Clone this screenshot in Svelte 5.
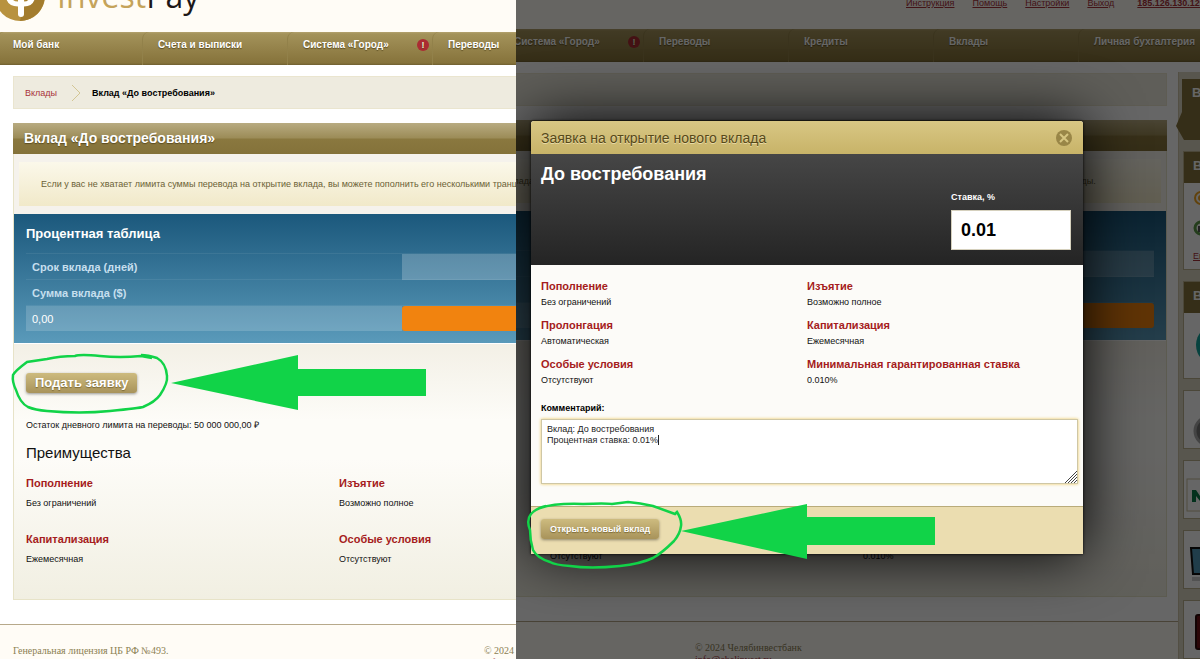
<script lang="ts">
	const tabs = [
		{ name: 'Мой банк', alert: false },
		{ name: 'Счета и выписки', alert: false },
		{ name: 'Система «Город»', alert: true },
		{ name: 'Переводы', alert: false },
		{ name: 'Кредиты', alert: false },
		{ name: 'Вклады', alert: false },
		{ name: 'Личная бухгалтерия', alert: false }
	];

	const links = ['Инструкция', 'Помощь', 'Настройки', 'Выход'];

	const benefits = [
		{ title: 'Пополнение', text: 'Без ограничений' },
		{ title: 'Изъятие', text: 'Возможно полное' },
		{ title: 'Пролонгация', text: 'Автоматическая' },
		{ title: 'Капитализация', text: 'Ежемесячная' },
		{ title: 'Особые условия', text: 'Отсутствуют' },
		{ title: 'Минимальная ставка', text: '0.010%' }
	];

	const terms = [
		{ title: 'Пополнение', text: 'Без ограничений' },
		{ title: 'Изъятие', text: 'Возможно полное' },
		{ title: 'Пролонгация', text: 'Автоматическая' },
		{ title: 'Капитализация', text: 'Ежемесячная' },
		{ title: 'Особые условия', text: 'Отсутствуют' },
		{ title: 'Минимальная гарантированная ставка', text: '0.010%' }
	];

	let rate = $state('0.01');
	let comment = $state('Вклад: До востребования\nПроцентная ставка: 0.01%');
	let opened = $state(true);
</script>

{#snippet page()}
	<header class="top">
		<div class="logo">
			<svg width="50" height="50" viewBox="0 0 50 50">
				<circle cx="25" cy="25" r="25" fill="#b8923f" />
				<path d="M42 7A25 25 0 0 1 25 50L30 30Z" fill="#a37c2e" />
				<path d="M13 16v6q0 11 10 11h6q9 0 9-11v-6" fill="none" stroke="#fff" stroke-width="5" />
				<path d="M26 8v35" stroke="#fff" stroke-width="6" stroke-linecap="round" />
			</svg>
			<span class="brand"><span class="gold">Invest</span>Pay</span>
		</div>
		<div class="links">
			{#each links as link}
				<a href="#top">{link}</a>
			{/each}
			<a href="#top" class="ip">185.126.130.120</a>
		</div>
	</header>

	<nav class="tabs">
		{#each tabs as tab}
			<a href="#tab" class="tab">
				{tab.name}
				{#if tab.alert}
					<span class="alert">!</span>
				{/if}
			</a>
		{/each}
	</nav>

	<div class="body">
		<main class="content">
			<div class="crumbs">
				<a href="#deposits">Вклады</a>
				<svg width="10" height="18" viewBox="0 0 10 18">
					<path d="M1 1l8 8-8 8" fill="none" stroke="#d3c694" />
				</svg>
				<b>Вклад «До востребования»</b>
			</div>

			<h1>Вклад «До востребования»</h1>
			<section class="panel">
				<p class="notice">
					Если у вас не хватает лимита суммы перевода на открытие вклада, вы можете пополнить его
					несколькими траншами в&nbsp;течение последующих дней, не превышая дневного лимита суммы на переводы.
				</p>

				<div class="rates">
					<h2>Процентная таблица</h2>
					<table>
						<tbody>
							<tr>
								<th>Срок вклада (дней)</th>
								<td class="days"></td>
							</tr>
							<tr>
								<th>Сумма вклада ($)</th>
								<td></td>
							</tr>
							<tr class="sum">
								<td>0,00</td>
								<td class="percent"></td>
							</tr>
						</tbody>
					</table>
				</div>

				<div class="details">
					<button class="gold-button large" onclick={() => (opened = true)}>Подать заявку</button>
					<p class="limit">Остаток дневного лимита на переводы: 50 000 000,00 ₽</p>
					<h3>Преимущества</h3>
					<div class="benefits">
						{#each benefits as item}
							<div class="benefit">
								<h4>{item.title}</h4>
								<p>{item.text}</p>
							</div>
						{/each}
					</div>
				</div>
			</section>
		</main>

		<aside class="side">
			<div class="flag">
				<svg width="24" height="61" viewBox="0 0 24 61">
					<path d="M6 0H24V61H8L0 47 6 33Z" fill="#86743c" />
				</svg>
				<b>В</b>
			</div>
			<div class="card">
				<div class="card-head">В</div>
				<div class="card-list">
					<svg width="18" height="16" viewBox="0 0 18 16">
						<circle cx="8" cy="8" r="7" fill="#f2a51e" />
						<path d="M8 4a4 4 0 1 0 0 8" fill="none" stroke="#fff" stroke-width="2" />
					</svg>
					<svg width="18" height="16" viewBox="0 0 18 16">
						<circle cx="8" cy="8" r="6" fill="#fff" stroke="#5a9a48" stroke-width="3" />
						<path d="M5 6h8v6H5Z" fill="#555" />
					</svg>
					<a href="#more">Ещё</a>
				</div>
			</div>
			<div class="card">
				<div class="card-head">В</div>
				<svg width="60" height="65" viewBox="0 0 60 65">
					<circle cx="32" cy="32" r="20" fill="#10a59d" />
				</svg>
			</div>
			<div class="card">
				<svg width="60" height="55" viewBox="0 0 60 55">
					<circle cx="25" cy="40" r="14" fill="#777" stroke="#aaa" stroke-width="3" />
				</svg>
			</div>
			<div class="card">
				<svg width="60" height="55" viewBox="0 0 60 55">
					<rect x="3" y="18" width="80" height="32" fill="#fff" stroke="#cabf9c" />
					<path d="M8 41V29h4l4 6 4-6h4v12h-4v-6l-4 5-4-5v6Z" fill="#087a4a" />
				</svg>
			</div>
			<div class="card">
				<svg width="60" height="55" viewBox="0 0 60 55">
					<path d="M7 17h50v26H9Z" fill="#5199b9" stroke="#111" stroke-width="2" />
					<path d="M8 48h50" stroke="#ccc" stroke-width="4" />
				</svg>
			</div>
			<div class="card">
				<svg width="60" height="55" viewBox="0 0 60 55">
					<rect x="12" y="14" width="40" height="34" rx="2" fill="#6d1114" stroke="#2d0808" stroke-width="2" />
				</svg>
			</div>
		</aside>
	</div>

	<footer class="footer">
		<div>Генеральная лицензия ЦБ РФ №493.</div>
		<div>
			© 2024 Челябинвестбанк<br />
			<a href="mailto:info@chelinvest.ru">info@chelinvest.ru</a>
		</div>
	</footer>
{/snippet}

<div class="steps">
	<div class="step">
		<div class="page first">
			{@render page()}
		</div>
		<svg class="marks" width="516" height="659" viewBox="0 0 516 659">
			<path class="arrow" d="M171 383L298 355V369H426V396H298V410Z" />
			<path
				class="loop"
				d="M152 358L141 356Q120 358 100 356T75 356Q60 356 47 359L27 362Q15 371 13 375Q12 382 16 390Q20 403 28 407Q35 410 47 411Q80 414 110 411T143 407Q155 402 160 395Q168 383 167 376Q166 363 157 358Q148 355 141 355"
			/>
		</svg>
	</div>

	<div class="step">
		<div class="page second" inert>
			{@render page()}
		</div>
		{#if opened}
			<div class="shade"></div>
			<form class="modal" onsubmit={(e) => e.preventDefault()}>
				<div class="modal-title">
					<span>Заявка на открытие нового вклада</span>
					<button type="button" class="close" aria-label="Закрыть" onclick={() => (opened = false)}>
						<svg width="16" height="16" viewBox="0 0 16 16">
							<circle cx="8" cy="8" r="8" fill="#998647" />
							<path d="M4 4l8 8M12 4l-8 8" stroke="#d6c581" stroke-width="2" />
						</svg>
					</button>
				</div>
				<div class="modal-head">
					<h2>До востребования</h2>
					<div class="rate">
						<label for="rate">Ставка, %</label>
						<input id="rate" type="text" bind:value={rate} />
					</div>
				</div>
				<div class="modal-body">
					<div class="terms">
						{#each terms as item}
							<div>
								<h4>{item.title}</h4>
								<p>{item.text}</p>
							</div>
						{/each}
					</div>
					<label class="comment-label" for="comment">Комментарий:</label>
					<div class="comment">
						<textarea id="comment" bind:value={comment}></textarea>
						<span class="caret"></span>
						<svg class="grip" width="12" height="12" viewBox="0 0 12 12">
							<path d="M0 12L12 0M3 12L12 3M6 12L12 6M9 12L12 9" stroke="#444" />
						</svg>
					</div>
				</div>
				<div class="modal-foot">
					<button class="gold-button">Открыть новый вклад</button>
				</div>
			</form>
		{/if}
		<svg class="marks" width="684" height="659" viewBox="516 0 684 659">
			<path class="arrow" d="M681 531L807 504V517H935V545H807V559Z" />
			<path
				class="loop"
				d="M540 508Q555 503 583 504Q605 503 612 504L628 502Q640 503 653 506L675 514L677 512Q682 520 681 526Q680 534 674 541Q662 553 653 558Q640 564 620 566Q590 569 570 566Q555 565 550 562Q537 558 533 550Q530 540 530 530Q526 520 531 514Q535 509 546 506"
			/>
		</svg>
	</div>
</div>

<style>
	:global(body) {
		margin: 0;
	}

	.steps {
		display: grid;
		grid-template-columns: 43fr 57fr;
		height: 100vh;
		overflow: hidden;
		font-family: 'Liberation Sans', Arial, sans-serif;
		font-size: 9px;
		line-height: 12px;
		color: #111;
	}

	.step {
		position: relative;
		overflow: hidden;
		background: #fffcf6;
	}

	h1,
	h2,
	h3,
	h4,
	p {
		margin: 0;
	}

	a {
		color: #a8323a;
	}

	/* both steps look at the same page, scrolled differently */
	.page {
		background: #fff;
	}

	.first {
		margin-left: -3px;
		margin-right: -670px;
	}

	.second {
		margin-top: -3px;
		margin-left: -308px;
		margin-right: -198px;
	}

	.top {
		display: grid;
		grid-template-columns: 698px 1fr;
		height: 32px;
		background: #fffcf6;
	}

	.logo {
		display: flex;
		align-items: end;
		gap: 12px;
		height: 21px;
		margin-left: -2px;
	}

	.logo svg {
		flex: none;
	}

	.brand {
		font-family: 'Open Sans', sans-serif;
		font-size: 32px;
		line-height: 50px;
		color: #1d1718;
	}

	.gold {
		color: #c5a35a;
	}

	.links {
		display: flex;
		gap: 18px;
	}

	.ip {
		margin-left: 5px;
		font-weight: 700;
	}

	.tabs {
		display: flex;
		height: 33px;
		background: linear-gradient(#b3a26f, #a3925a 2px, #86733b 31px, #6f5f30);
	}

	.tab {
		box-sizing: border-box;
		flex: none;
		display: flex;
		justify-content: space-between;
		width: 145px;
		padding: 7px 3px 0 15px;
		border-left: 1px solid #92814a;
		border-top-left-radius: 7px;
		color: #fff;
		font-size: 10px;
		font-weight: 700;
		text-decoration: none;
		text-shadow: 0 1px 1px #5b4c21;
	}

	.alert {
		width: 12px;
		height: 12px;
		border-radius: 6px;
		background: #ab2c33;
		color: #eec;
		font-size: 9px;
		text-align: center;
	}

	.body {
		display: grid;
		grid-template-columns: minmax(0, 1fr) 220px;
	}

	.content {
		padding: 11px 11px 24px 16px;
	}

	.crumbs {
		box-sizing: border-box;
		display: flex;
		align-items: center;
		gap: 14px;
		height: 33px;
		margin-bottom: 14px;
		padding: 0 11px;
		border: 1px solid #eae5cf;
		background: #eeebdf;
	}

	.crumbs a {
		text-decoration: none;
	}

	.crumbs b {
		margin-left: -3px;
		color: #000;
	}

	h1 {
		height: 31px;
		padding-left: 11px;
		background: linear-gradient(#b8ab81, #9c8c58 48%, #8a783f 52%, #84723a);
		color: #fff;
		font-size: 14px;
		line-height: 30px;
		text-shadow: 0 1px 1px #5b4c21;
	}

	.panel {
		display: flow-root;
		border: 1px solid #e7e3c8;
		border-top: 0;
		background: #f5f2ec;
	}

	.notice {
		margin: 8px 5px;
		padding: 16px 22px;
		background: linear-gradient(#fbf8ea, #f1e9c9);
		color: #6b6135;
		white-space: nowrap;
	}

	.rates {
		padding: 10px 12px 12px;
		background: linear-gradient(#1b587c, #5a9aba);
		color: #fff;
		border-bottom: 1px solid #fff;
	}

	.rates h2 {
		margin-bottom: 9px;
		font-size: 13px;
		line-height: 20px;
	}

	table {
		width: 100%;
		table-layout: fixed;
		border-collapse: collapse;
		font-size: 11px;
	}

	th,
	td {
		height: 25px;
		padding: 0 6px;
		border-top: 1px solid rgba(255, 255, 255, 0.07);
		text-align: left;
	}

	th {
		width: 364px;
		color: #c6dfee;
	}

	.days {
		background: rgba(255, 255, 255, 0.22);
	}

	.sum td {
		background: rgba(255, 255, 255, 0.17);
	}

	.sum .percent {
		border-radius: 3px;
		background: #f1830f;
	}

	.details {
		padding: 29px 12px 34px;
		background: linear-gradient(#f3f0e6, #fdfcf8 30%, #fdfcf8 45%, #f1efe2);
	}

	.gold-button {
		height: 20px;
		padding: 0 9px;
		border: 0;
		border-radius: 3px;
		background: linear-gradient(#cdbb7f, #a8935a);
		box-shadow: 0 1px 3px rgba(0, 0, 0, 0.4);
		color: #fff;
		font-family: inherit;
		font-size: 9px;
		font-weight: 700;
		line-height: 20px;
		text-shadow: 0 1px 1px #7b6a37;
	}

	.large {
		display: block;
		font-size: 13px;
	}

	.limit {
		margin-top: 26px;
	}

	h3 {
		margin: 12px 0 13px;
		font-size: 15px;
		font-weight: 400;
		line-height: 20px;
	}

	h4 {
		color: #a51c20;
		font-size: 11px;
		line-height: 14px;
	}

	.benefits {
		display: grid;
		grid-template-columns: 313px 313px 1fr;
		row-gap: 23px;
	}

	.benefit {
		display: grid;
		gap: 7px;
	}

	.side {
		display: flex;
		flex-direction: column;
		gap: 11px;
		padding: 7px 0 0 4px;
		height: 580px;
		margin-top: 10px;
		margin-bottom: -60px;
		background: #ddd6c2;
		border-left: 1px solid #cfc6aa;
	}

	.flag {
		display: flex;
		align-items: start;
		margin-left: -7px;
	}

	.flag b,
	.card-head {
		color: #fff;
		font-size: 13px;
		font-weight: 700;
		line-height: 28px;
	}

	.flag b {
		margin-left: -8px;
	}

	.card {
		flex: none;
		box-sizing: border-box;
		min-height: 59px;
		border: 1px solid #bbb18f;
		background: #fff;
	}

	.card > svg {
		display: block;
	}

	.card-head {
		padding-left: 9px;
		height: 31px;
		background: #86743c;
	}

	.card-list {
		display: grid;
		gap: 14px;
		padding: 7px 9px;
	}

	.footer {
		display: grid;
		grid-template-columns: 471px 1fr;
		width: calc(100% - 236px);
		padding: 20px 0 10px 16px;
		border-top: 1px solid #b7a98a;
		background: #fffcf6;
		color: #8b8052;
		font-family: 'Liberation Serif', 'Times New Roman', serif;
		font-size: 10px;
		line-height: 12px;
	}

	.shade {
		position: absolute;
		inset: 0;
		background: rgba(0, 0, 0, 0.6);
	}

	.modal {
		position: absolute;
		top: 121px;
		left: 15px;
		right: 117px;
		border-radius: 3px 3px 0 0;
		background: #fcfbf8;
		box-shadow: 0 0 3px #000, 0 0 60px #000;
	}

	.modal-title {
		display: flex;
		align-items: center;
		justify-content: space-between;
		height: 33px;
		padding: 0 11px 0 10px;
		border-radius: 3px 3px 0 0;
		background: linear-gradient(#d8c784, #c8b368);
		color: #574919;
		font-size: 14px;
		text-shadow: 0 1px 0 #e9dba6;
	}

	.close {
		padding: 0;
		border: 0;
		background: none;
	}

	.close svg {
		display: block;
	}

	.modal-head {
		display: flex;
		justify-content: space-between;
		padding: 10px 12px 15px 10px;
		background: linear-gradient(#464646, #242424);
		color: #fff;
	}

	.modal-head h2 {
		font-size: 18px;
		line-height: 20px;
	}

	.rate {
		display: grid;
		gap: 7px;
		padding-top: 27px;
		font-weight: 700;
	}

	.rate input {
		box-sizing: border-box;
		width: 120px;
		height: 40px;
		padding: 0 9px;
		border: 1px solid #d5d0bd;
		background: #fff;
		color: #000;
		font: inherit;
		font-size: 18px;
	}

	.modal-body {
		padding: 14px 5px 22px 10px;
	}

	.terms {
		display: grid;
		grid-template-columns: 1fr 1fr;
		row-gap: 10px;
		margin: 0 5px 16px 0;
	}

	.terms p {
		padding-top: 3px;
	}

	.comment-label {
		display: block;
		margin-bottom: 5px;
		font-weight: 700;
		color: #000;
	}

	.comment {
		position: relative;
	}

	textarea {
		display: block;
		box-sizing: border-box;
		width: 100%;
		height: 65px;
		padding: 4px 5px;
		border: 1px solid #cfc7a5;
		outline: 0;
		box-shadow: 0 0 3px #ecc95a;
		background: #fff;
		resize: none;
		color: #222;
		font: inherit;
		line-height: 11px;
	}

	.caret {
		position: absolute;
		top: 16px;
		left: 117px;
		width: 1px;
		height: 10px;
		background: #222;
	}

	.grip {
		position: absolute;
		right: 1px;
		bottom: 1px;
	}

	.modal-foot {
		padding: 12px 10px 15px;
		border-top: 1px solid #b9ab7a;
		background: #ebddb0;
	}

	.modal-foot .gold-button {
		display: block;
	}

	.marks {
		position: absolute;
		top: 0;
		left: 0;
		pointer-events: none;
	}

	.arrow {
		fill: #11d348;
	}

	.loop {
		fill: none;
		stroke: #11d348;
		stroke-width: 2.5;
	}
</style>
